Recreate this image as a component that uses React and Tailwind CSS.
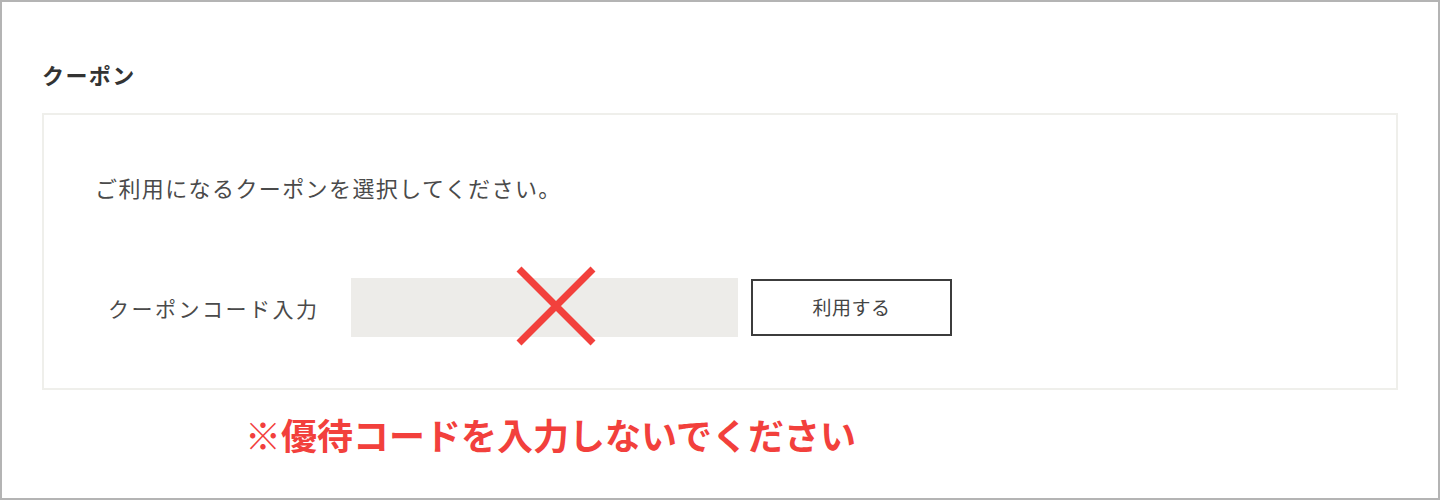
import React from 'react';

export default function App() {
  return (
    <div
      className="w-[1440px] h-[500px] bg-white border-2 border-[#b4b4b4] px-[40px] pt-[57px]"
      style={{ fontFamily: '"Noto Sans CJK JP", "Noto Sans", sans-serif' }}
    >
      <h2 className="text-[22px] leading-[30px] font-bold text-[#333] tracking-[1.4px] mb-[24px]">
        クーポン
      </h2>

      {/* Coupon box */}
      <div className="border-2 border-[#efefeb] pt-[57px] pb-[51px] pl-[51px]">
        <p className="text-[22px] leading-[30px] text-[#4a4a4a] tracking-[1.4px]">
          ご利用になるクーポンを選択してください。
        </p>

        <div className="flex items-center mt-[76px] pl-[13px]">
          <span className="w-[243px] text-[21px] leading-[30px] text-[#4a4a4a] tracking-[2.5px]">
            クーポンコード入力
          </span>
          <div className="relative w-[387px] h-[59px] bg-[#edece9]">
            <svg
              className="absolute left-[165px] top-[-12px]"
              width="80"
              height="80"
              viewBox="0 0 80 80"
            >
              <path d="M3 3 L77 77 M77 3 L3 77" stroke="#f2403c" strokeWidth="7" />
            </svg>
          </div>
          <button className="ml-[13px] w-[201px] h-[57px] border-2 border-[#3c3c3c] bg-white text-[19px] text-[#444] tracking-[0.5px]">
            利用する
          </button>
        </div>
      </div>

      <p className="mt-[24px] ml-[203px] text-[36px] leading-[40px] font-bold text-[#f2403c]">
        ※優待コードを入力しないでください
      </p>
    </div>
  );
}
